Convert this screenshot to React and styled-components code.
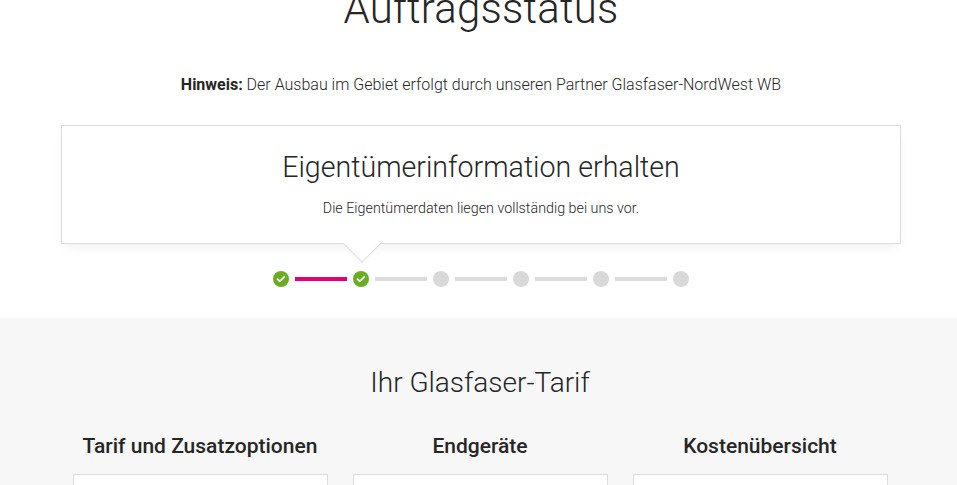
import React from "react";
import styled, { createGlobalStyle } from "styled-components";

const Global = createGlobalStyle`
  html, body { margin: 0; padding: 0; background: #fff; }
  body { font-family: Roboto, "Open Sans", "Liberation Sans", sans-serif; color: #262626; overflow: hidden; }
`;

const Page = styled.div`
  width: 957px;
  padding-left: 5px;
  box-sizing: border-box;
`;

const Top = styled.section`
  display: flex;
  flex-direction: column;
  align-items: center;
  padding-bottom: 30px;
`;

const PageTitle = styled.h1`
  margin: -17px 0 0;
  font-size: 42px;
  font-weight: 300;
  line-height: 52px;
  letter-spacing: 0.2px;
`;

const Hint = styled.p`
  margin: 39px 0 0;
  font-size: 16px;
  font-weight: 300;
  line-height: 21px;
  b { font-weight: 700; }
`;

const StatusBox = styled.div`
  position: relative;
  margin-top: 30px;
  width: 840px;
  height: 119px;
  box-sizing: border-box;
  border: 1px solid #dcdcdc;
  background: #fff;
  box-shadow: 0 6px 12px -4px rgba(0, 0, 0, 0.07);
  display: flex;
  flex-direction: column;
  align-items: center;
`;

const Pointer = styled.div`
  position: absolute;
  left: ${(p) => p.$x}px;
  bottom: -14px;
  width: 27px;
  height: 27px;
  margin-left: -14px;
  background: #fff;
  border-right: 1px solid #dcdcdc;
  border-bottom: 1px solid #dcdcdc;
  transform: rotate(45deg);
`;

const BoxTitle = styled.h2`
  margin: 23px 0 0;
  font-size: 28.6px;
  font-weight: 300;
  line-height: 36px;
`;

const BoxText = styled.p`
  margin: 14px 0 0;
  font-size: 14.3px;
  font-weight: 300;
  line-height: 18px;
`;

const Steps = styled.div`
  margin-top: 27px;
  display: flex;
  align-items: center;
  gap: 6px;
`;

const Dot = styled.span`
  width: 16px;
  height: 16px;
  border-radius: 50%;
  background: ${(p) => (p.$done ? "#6aad24" : "#d9d9d9")};
  display: flex;
  align-items: center;
  justify-content: center;
`;

const Line = styled.span`
  width: 52px;
  height: 4px;
  background: ${(p) => (p.$done ? "#e20074" : "#dcdcdc")};
`;

const Gray = styled.section`
  background: #f7f7f7;
  display: flex;
  flex-direction: column;
  align-items: center;
  padding-top: 47px;
  height: 200px;
  margin-top: 1px;
  margin-left: -5px;
  padding-left: 3px;
`;

const SectionTitle = styled.h2`
  margin: 0;
  font-size: 28px;
  font-weight: 300;
  line-height: 36px;
`;

const Columns = styled.div`
  margin-top: 32px;
  display: grid;
  grid-template-columns: repeat(3, 255px);
  column-gap: 25px;
`;

const Column = styled.div`
  display: flex;
  flex-direction: column;
  align-items: center;
`;

const ColTitle = styled.h3`
  margin: 0;
  font-size: 21px;
  font-weight: 500;
  line-height: 26px;
`;

const Card = styled.div`
  margin-top: 15px;
  width: 100%;
  height: 120px;
  box-sizing: border-box;
  border: 1px solid #dcdcdc;
  background: #fff;
`;

const Check = () => (
  <svg width="10" height="8" viewBox="0 0 10 8">
    <path d="M1.5 4.2 L3.8 6.3 L8.5 1.6" fill="none" stroke="#fff" strokeWidth="1.6" strokeLinecap="round" strokeLinejoin="round" />
  </svg>
);

const states = [true, true, false, false, false, false];

export default function App() {
  return (
    <Page>
      <Global />
      <Top>
        <PageTitle>Auftragsstatus</PageTitle>
        <Hint>
          <b>Hinweis:</b> Der Ausbau im Gebiet erfolgt durch unseren Partner Glasfaser-NordWest WB
        </Hint>
        <StatusBox>
          <BoxTitle>Eigentümerinformation erhalten</BoxTitle>
          <BoxText>Die Eigentümerdaten liegen vollständig bei uns vor.</BoxText>
          <Pointer $x={300} />
        </StatusBox>
        <Steps>
          {states.map((d, i) => (
            <React.Fragment key={i}>
              {i > 0 && <Line $done={d} />}
              <Dot $done={d}>{d && <Check />}</Dot>
            </React.Fragment>
          ))}
        </Steps>
      </Top>
      <Gray>
        <SectionTitle>Ihr Glasfaser-Tarif</SectionTitle>
        <Columns>
          <Column>
            <ColTitle>Tarif und Zusatzoptionen</ColTitle>
            <Card />
          </Column>
          <Column>
            <ColTitle>Endgeräte</ColTitle>
            <Card />
          </Column>
          <Column>
            <ColTitle>Kostenübersicht</ColTitle>
            <Card />
          </Column>
        </Columns>
      </Gray>
    </Page>
  );
}
